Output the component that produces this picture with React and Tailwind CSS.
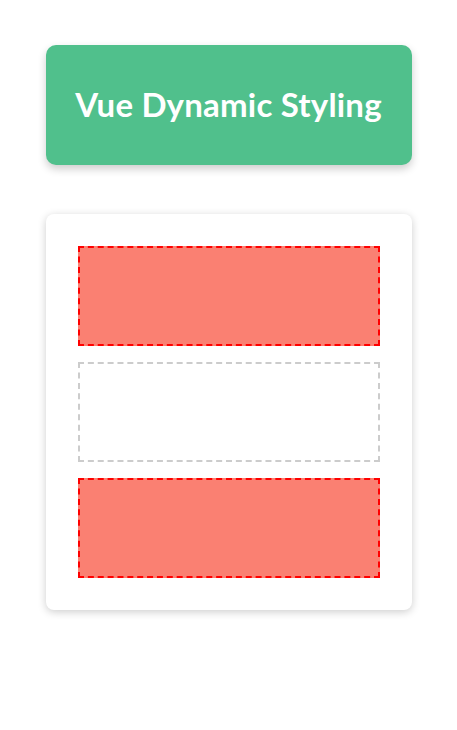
import React from 'react';

const Box = ({ active }) => (
  <div
    className={`h-[100px] border-2 border-dashed ${
      active ? 'bg-[#fa8072] border-[#ff0000]' : 'bg-white border-[#cccccc]'
    }`}
  />
);

export default function App() {
  const boxes = [true, false, true];
  return (
    <div className="min-h-screen bg-white pt-[45px] font-['Lato',sans-serif]">
      <div className="w-[366px] mx-auto">
        <div className="h-[120px] flex items-center justify-center rounded-[10px] bg-[#50c08c] shadow-[0_4px_8px_rgba(0,0,0,0.2)]">
          <h1 className="text-white text-[33px] font-bold tracking-[0.2px]">Vue Dynamic Styling</h1>
        </div>
        <div className="mt-[49px] rounded-[8px] bg-white p-8 flex flex-col gap-4 shadow-[0_2px_8px_rgba(0,0,0,0.2)]">
          {boxes.map((a, i) => (
            <Box key={i} active={a} />
          ))}
        </div>
      </div>
    </div>
  );
}
